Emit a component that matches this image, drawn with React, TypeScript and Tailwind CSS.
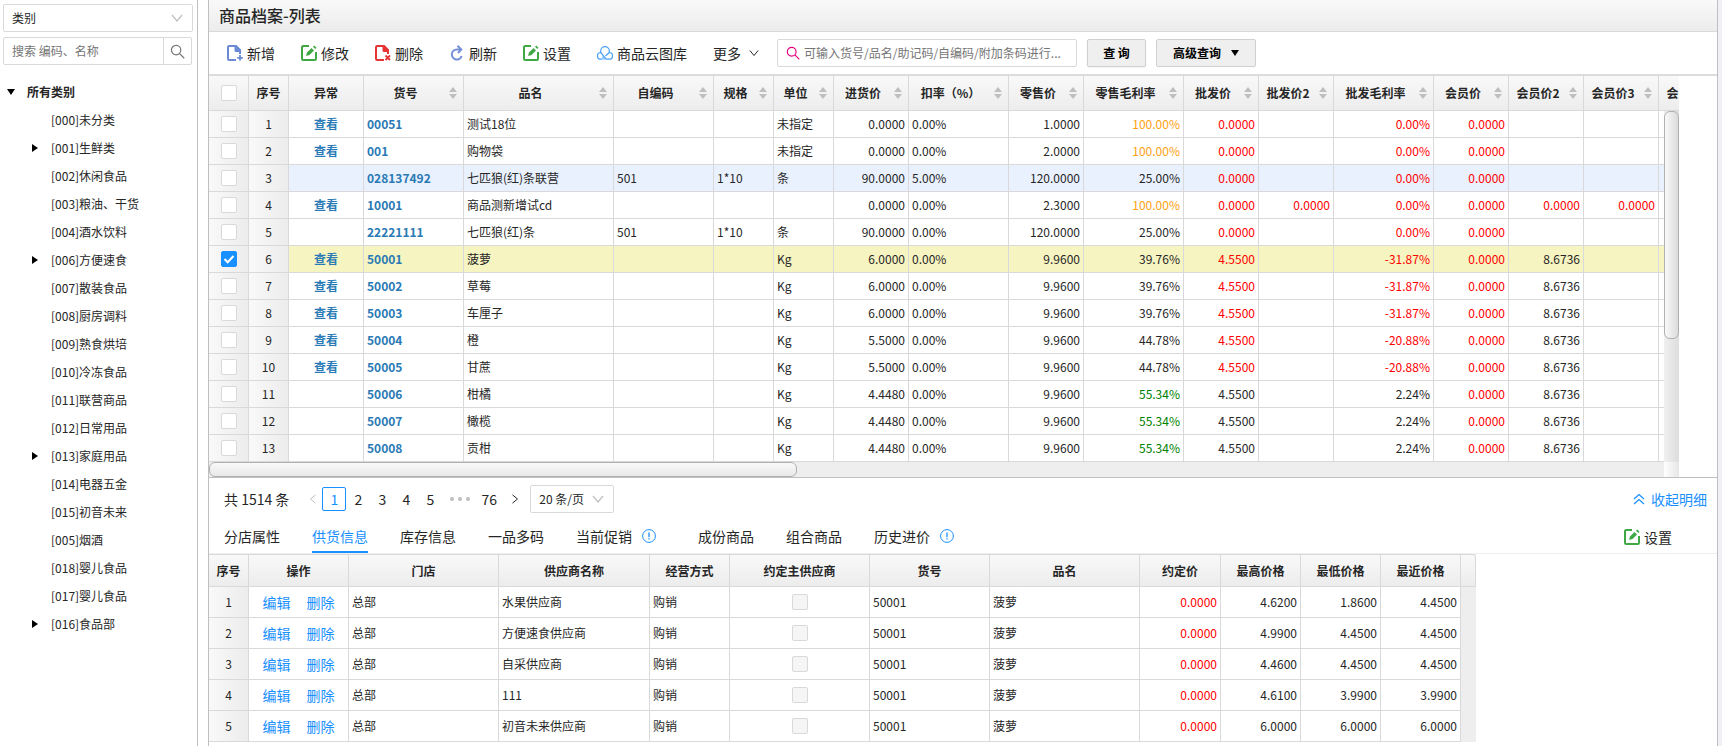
import React from "react";

const toolbarText = "flex items-center gap-1 text-sm leading-5 text-[#262626]";

type Col = { title: string; width: string; sort?: boolean };

const columns: Col[] = [
    { title: "异常", width: "w-[75px]" },
    { title: "货号", width: "w-[100px]", sort: true },
    { title: "品名", width: "w-[150px]", sort: true },
    { title: "自编码", width: "w-[100px]", sort: true },
    { title: "规格", width: "w-[60px]", sort: true },
    { title: "单位", width: "w-[60px]", sort: true },
    { title: "进货价", width: "w-[75px]", sort: true },
    { title: "扣率（%）", width: "w-[100px]", sort: true },
    { title: "零售价", width: "w-[75px]", sort: true },
    { title: "零售毛利率", width: "w-[100px]", sort: true },
    { title: "批发价", width: "w-[75px]", sort: true },
    { title: "批发价2", width: "w-[75px]", sort: true },
    { title: "批发毛利率", width: "w-[100px]", sort: true },
    { title: "会员价", width: "w-[75px]", sort: true },
    { title: "会员价2", width: "w-[75px]", sort: true },
    { title: "会员价3", width: "w-[75px]", sort: true },
    { title: "会员价4", width: "w-[75px]", sort: true },
];

// 异常, 货号, 品名, 自编码, 规格, 单位, 进货价, 扣率, 零售价, 零售毛利率, 批发价, 批发价2, 批发毛利率, 会员价, 会员价2, 会员价3
const goods: string[][] = [
    ["查看", "00051", "测试18位", "", "", "未指定", "0.0000", "0.00%", "1.0000", "100.00%", "0.0000", "", "0.00%", "0.0000", "", "", ""],
    ["查看", "001", "购物袋", "", "", "未指定", "0.0000", "0.00%", "2.0000", "100.00%", "0.0000", "", "0.00%", "0.0000", "", "", ""],
    ["", "028137492", "七匹狼(红)条联营", "501", "1*10", "条", "90.0000", "5.00%", "120.0000", "25.00%", "0.0000", "", "0.00%", "0.0000", "", "", ""],
    ["查看", "10001", "商品测新增试cd", "", "", "", "0.0000", "0.00%", "2.3000", "100.00%", "0.0000", "0.0000", "0.00%", "0.0000", "0.0000", "0.0000", ""],
    ["", "22221111", "七匹狼(红)条", "501", "1*10", "条", "90.0000", "0.00%", "120.0000", "25.00%", "0.0000", "", "0.00%", "0.0000", "", "", ""],
    ["查看", "50001", "菠萝", "", "", "Kg", "6.0000", "0.00%", "9.9600", "39.76%", "4.5500", "", "-31.87%", "0.0000", "8.6736", "", ""],
    ["查看", "50002", "草莓", "", "", "Kg", "6.0000", "0.00%", "9.9600", "39.76%", "4.5500", "", "-31.87%", "0.0000", "8.6736", "", ""],
    ["查看", "50003", "车厘子", "", "", "Kg", "6.0000", "0.00%", "9.9600", "39.76%", "4.5500", "", "-31.87%", "0.0000", "8.6736", "", ""],
    ["查看", "50004", "橙", "", "", "Kg", "5.5000", "0.00%", "9.9600", "44.78%", "4.5500", "", "-20.88%", "0.0000", "8.6736", "", ""],
    ["查看", "50005", "甘蔗", "", "", "Kg", "5.5000", "0.00%", "9.9600", "44.78%", "4.5500", "", "-20.88%", "0.0000", "8.6736", "", ""],
    ["", "50006", "柑橘", "", "", "Kg", "4.4480", "0.00%", "9.9600", "55.34%", "4.5500", "", "2.24%", "0.0000", "8.6736", "", ""],
    ["", "50007", "橄榄", "", "", "Kg", "4.4480", "0.00%", "9.9600", "55.34%", "4.5500", "", "2.24%", "0.0000", "8.6736", "", ""],
    ["", "50008", "贡柑", "", "", "Kg", "4.4480", "0.00%", "9.9600", "55.34%", "4.5500", "", "2.24%", "0.0000", "8.6736", "", ""],
];

const tree = [
    { name: "[000]未分类" },
    { name: "[001]生鲜类", open: true },
    { name: "[002]休闲食品" },
    { name: "[003]粮油、干货" },
    { name: "[004]酒水饮料" },
    { name: "[006]方便速食", open: true },
    { name: "[007]散装食品" },
    { name: "[008]厨房调料" },
    { name: "[009]熟食烘培" },
    { name: "[010]冷冻食品" },
    { name: "[011]联营商品" },
    { name: "[012]日常用品" },
    { name: "[013]家庭用品", open: true },
    { name: "[014]电器五金" },
    { name: "[015]初音未来" },
    { name: "[005]烟酒" },
    { name: "[018]婴儿食品" },
    { name: "[017]婴儿食品" },
    { name: "[016]食品部", open: true },
];

const supplyCols: Col[] = [
    { title: "序号", width: "w-10" },
    { title: "操作", width: "w-[100px]" },
    { title: "门店", width: "w-[150px]" },
    { title: "供应商名称", width: "w-[151px]" },
    { title: "经营方式", width: "w-[80px]" },
    { title: "约定主供应商", width: "w-[140px]" },
    { title: "货号", width: "w-[120px]" },
    { title: "品名", width: "w-[150px]" },
    { title: "约定价", width: "w-[81px]" },
    { title: "最高价格", width: "w-[80px]" },
    { title: "最低价格", width: "w-[80px]" },
    { title: "最近价格", width: "w-[80px]" },
];

const supplies = [
    { name: "水果供应商", high: "4.6200", low: "1.8600", last: "4.4500" },
    { name: "方便速食供应商", high: "4.9900", low: "4.4500", last: "4.4500" },
    { name: "自采供应商", high: "4.4600", low: "4.4500", last: "4.4500" },
    { name: "111", high: "4.6100", low: "3.9900", last: "3.9900" },
    { name: "初音未来供应商", high: "6.0000", low: "6.0000", last: "6.0000" },
];

const tabs = [
    { name: "分店属性" },
    { name: "供货信息" },
    { name: "库存信息" },
    { name: "一品多码" },
    { name: "当前促销", tip: true },
    { name: "成份商品" },
    { name: "组合商品" },
    { name: "历史进价", tip: true },
];

const Chevron = ({ className, d = "M1 3 L6 9 L11 3" }: { className?: string; d?: string }) => (
    <svg viewBox="0 0 12 12" className={className} fill="none" stroke="currentColor" strokeWidth="1.2">
        <path d={d} />
    </svg>
);

const FileIcon = ({ color, remove }: { color: string; remove?: boolean }) => (
    <svg viewBox="0 0 16 16" className="size-4" fill="none" stroke={color}>
        <path d="M9 15H2.2Q1 15 1 13.8V2.2Q1 1 2.2 1H8.5" strokeWidth="2" />
        <path d="M7.5 0H9.5L14 4.500V9H12V7H9Q7.500 7 7.500 5.500Z" fill={color} stroke="none" />
        {remove ? (
            <path d="M10.500 10.500L15 15M15 10.500L10.500 15" strokeWidth="1.800" />
        ) : (
            <path d="M13 10V15.500M10.200 12.800H15.800" strokeWidth="1.800" />
        )}
    </svg>
);

const EditIcon = () => (
    <svg viewBox="0 0 16 16" className="size-4" fill="none" stroke="#3fa845">
        <path d="M8 1H2.2Q1 1 1 2.2V13.8Q1 15 2.2 15H13.8Q15 15 15 13.8V7" strokeWidth="2" />
        <path d="M5 11L6 7.5L10.5 3L13 5.5L8.5 10Z" fill="#3fa845" stroke="none" />
        <path d="M12 1.7L13.2 0.5L15.5 2.8L14.3 4Z" fill="#3fa845" stroke="none" />
    </svg>
);

const RefreshIcon = () => (
    <svg viewBox="0 0 16 16" className="size-4" fill="none" stroke="#7490d8" strokeWidth="2">
        <path d="M12 4.500H7.800A5 5 0 1 0 12.600 11" />
        <path d="M8.500 0.800L12.300 4.500L9 8" />
    </svg>
);

const CloudIcon = () => (
    <svg viewBox="0 0 16 16" className="size-4" fill="none" stroke="#4a9ff5" strokeWidth="1.2">
        <path d="M5 14.200H4A3.300 3.300 0 0 1 3.700 7.500V6A4.300 4.300 0 0 1 12.300 6V7.500A3.300 3.300 0 0 1 12 14.200H10Q8.500 14 7.500 12L3.700 7.500M12.300 7.500L8.500 11" />
        <path d="M6 11.500V14.500M8 13V14.500" />
    </svg>
);

const SearchIcon = ({ className }: { className?: string }) => (
    <svg viewBox="0 0 16 16" className={className} fill="none" stroke="currentColor" strokeWidth="1.3">
        <circle cx="6.5" cy="6.5" r="5" />
        <path d="M10.2 10.2L15.2 15.2" />
    </svg>
);

const TipIcon = () => (
    <svg viewBox="0 0 14 14" className="size-[14px]" fill="none" stroke="#1890ff">
        <circle cx="7" cy="7" r="6.4" />
        <path d="M7 3.5V8.2M7 9.3V10.6" strokeWidth="1.3" />
    </svg>
);

const SortIcon = () => (
    <svg viewBox="0 0 8 12" className="absolute right-1.5 top-[11px] h-3 w-2" fill="#bfbfbf">
        <path d="M4 0L8 5H0Z" />
        <path d="M4 12L8 7H0Z" />
    </svg>
);

const Check = ({ label, checked, disabled }: { label: string; checked?: boolean; disabled?: boolean }) => (
    <label className="relative mx-auto block size-4">
        <input
            type="checkbox"
            aria-label={label}
            defaultChecked={checked}
            disabled={disabled}
            className="peer block size-4 appearance-none rounded-xs border border-[#d9d9d9] bg-white checked:border-[#1890ff] checked:bg-[#1890ff] disabled:bg-[#f5f5f5]"
        />
        <svg viewBox="0 0 16 16" className="pointer-events-none absolute inset-0 hidden size-4 peer-checked:block" fill="none" stroke="#fff" strokeWidth="2">
            <path d="M3.5 8L6.7 11.2L12.5 5" />
        </svg>
    </label>
);

const cellClass = (row: string[], i: number) => {
    if (i === 0) return "text-center font-bold text-[#2a7ab5]";
    if (i === 1) return "font-bold text-[#2a7ab5]";
    if (i < 6 || i === 7) return "";
    const v = row[i];
    if (i === 9 && v === "100.00%") return "text-right text-[#ffa011]";
    if (i === 9 && v === "55.34%") return "text-right text-[#008000]";
    if (i === 10 && row[12] !== "2.24%") return "text-right text-[#ff0000]";
    if (i === 12 && v !== "2.24%") return "text-right text-[#ff0000]";
    if (i > 10 && v === "0.0000") return "text-right text-[#ff0000]";
    return "text-right";
};

const headBg = "bg-linear-to-b from-[#f9f9f9] to-[#ececec]";
const sideBg = "bg-linear-to-r from-[#f9f9f9] to-[#ececec]";

const Sidebar = () => (
    <aside className="w-[198px] shrink-0 border-r border-[#bfbfbf] pl-[3px] pt-1">
        <div className="relative mr-1 h-7">
            <select aria-label="类别" className="h-7 w-full appearance-none rounded-xs border border-[#d9d9d9] bg-white px-2 text-xs text-[#262626]">
                <option>类别</option>
            </select>
            <Chevron className="pointer-events-none absolute right-2.5 top-2 size-3 text-[#bfbfbf]" />
        </div>
        <div className="mr-[5px] mt-[5px] flex h-7 rounded-xs border border-[#d9d9d9]">
            <input aria-label="搜索" placeholder="搜索 编码、名称" className="min-w-0 flex-1 px-2 text-xs outline-none placeholder:text-[#757575]" />
            <button aria-label="查找" className="flex w-7 items-center justify-center border-l border-[#d9d9d9] text-[#757575]">
                <SearchIcon className="size-[15px]" />
            </button>
        </div>
        <ul className="mt-[13px] text-xs text-[#262626]">
            <li className="flex h-7 items-center font-bold">
                <svg viewBox="0 0 8 6" className="ml-1 mr-3 h-1.5 w-2"><path d="M0 0H8L4 6Z" /></svg>
                所有类别
            </li>
            {tree.map((n) => (
                <li key={n.name} className="flex h-7 items-center pl-[29px]">
                    <span className="w-[19px]">
                        {n.open && <svg viewBox="0 0 6 8" className="h-2 w-1.5"><path d="M0 0V8L6 4Z" /></svg>}
                    </span>
                    {n.name}
                </li>
            ))}
        </ul>
    </aside>
);

const Toolbar = () => (
    <div className="flex h-[44px] items-center border-b-2 border-[#dcdcdc] pl-[18px]">
        <div className="flex items-center gap-[26px]">
            <button className={toolbarText}><FileIcon color="#6a8ad6" />新增</button>
            <button className={toolbarText}><EditIcon />修改</button>
            <button className={toolbarText}><FileIcon color="#e53434" remove />删除</button>
            <button className={toolbarText}><RefreshIcon />刷新</button>
            <button className={toolbarText}><EditIcon />设置</button>
            <button className={toolbarText}><CloudIcon />商品云图库</button>
            <button className="flex items-center gap-2 text-sm leading-5 text-[#262626]">更多<Chevron className="size-2.5" /></button>
        </div>
        <div className="ml-[18px] flex h-7 w-[300px] items-center gap-1 rounded-xs border border-[#d9d9d9] pl-2">
            <SearchIcon className="size-[14px] text-[#e3007f]" />
            <input aria-label="关键字" placeholder="可输入货号/品名/助记码/自编码/附加条码进行..." className="min-w-0 flex-1 text-xs outline-none placeholder:text-[#757575]" />
        </div>
        <button className="ml-2.5 h-7 w-[59px] rounded-xs border border-[#d0d0d0] bg-[#efefef] text-xs font-bold shadow-xs">查 询</button>
        <button className="ml-2.5 flex h-7 w-[100px] items-center justify-center gap-2.5 rounded-xs border border-[#d0d0d0] bg-[#efefef] text-xs font-bold">
            高级查询
            <svg viewBox="0 0 8 6" className="h-1.5 w-2"><path d="M0 0H8L4 6Z" /></svg>
        </button>
    </div>
);

const GoodsTable = () => (
    <div className="pr-[38px]">
        <div className="relative overflow-hidden">
            <table className="w-[1525px] table-fixed border-separate border-spacing-0 text-xs text-[#262626]">
                <thead>
                    <tr className={`h-[35px] ${headBg}`}>
                        <th className="w-10 border-b border-r border-[#d9d9d9]"><Check label="全选" /></th>
                        <th className="w-10 border-b border-r border-[#d9d9d9]">序号</th>
                        {columns.map((c) => (
                            <th key={c.title} className={`relative whitespace-nowrap border-b border-r border-[#d9d9d9] ${c.width} ${c.sort ? "pr-4" : ""}`}>
                                {c.title}
                                {c.sort && <SortIcon />}
                            </th>
                        ))}
                    </tr>
                </thead>
                <tbody>
                    {goods.map((row, r) => (
                        <tr key={row[1]} className={`h-[27px] ${r === 2 ? "bg-[#e9f1fe]" : r === 5 ? "bg-[#f6f4c1]" : "bg-white"}`}>
                            <td className={`border-b border-r border-[#d9d9d9] ${sideBg}`}><Check label={row[2]} checked={r === 5} /></td>
                            <td className={`border-b border-r border-[#d9d9d9] text-center ${sideBg}`}>{r + 1}</td>
                            {row.map((v, i) => (
                                <td key={i} className={`whitespace-nowrap border-b border-r border-[#d9d9d9] px-[3px] ${cellClass(row, i)}`}>
                                    {i === 0 && v ? <a href="#">{v}</a> : v}
                                </td>
                            ))}
                        </tr>
                    ))}
                </tbody>
            </table>
            {/* scroll tracks */}
            <div className="absolute bottom-0 right-0 top-[35px] w-[15px] bg-linear-to-r from-[#f0f0f0] to-[#dddddd]">
                <div className="h-[228px] rounded-md border border-[#b0b0b0] bg-linear-to-r from-[#f9f9f9] to-[#dcdcdc]" />
            </div>
        </div>
        <div className="flex h-[15px]">
            <div className="flex-1 bg-[#eeeeee]">
                <div className="h-[15px] w-[588px] rounded-md border border-[#b0b0b0] bg-linear-to-b from-[#f9f9f9] to-[#e8e8e8]" />
            </div>
            <div className="w-[15px] bg-linear-to-r from-white to-[#e6e6e6]" />
        </div>
    </div>
);

const Pagination = () => (
    <div className="flex h-[43px] items-center border-t border-[#bfbfbf] pl-[15px] pr-2.5 text-sm text-[#262626]">
        <span>共 1514 条</span>
        <button aria-label="上一页" className="ml-[15px] flex w-[18px] justify-center text-[#bfbfbf]"><Chevron className="size-2.5" d="M9 1L3 6L9 11" /></button>
        <button className="h-6 w-6 rounded-xs border border-[#1890ff] leading-5 text-[#1890ff]">1</button>
        {["2", "3", "4", "5"].map((p) => (
            <button key={p} className="h-6 w-6 leading-6">{p}</button>
        ))}
        <span className="flex w-[35px] justify-center gap-1">
            <i className="size-1 rounded-full bg-[#bfbfbf]" />
            <i className="size-1 rounded-full bg-[#bfbfbf]" />
            <i className="size-1 rounded-full bg-[#bfbfbf]" />
        </span>
        <button className="h-6 w-6 leading-6">76</button>
        <button aria-label="下一页" className="ml-0.5 flex w-6 justify-center"><Chevron className="size-2.5" d="M3 1L9 6L3 11" /></button>
        <div className="relative ml-[3px] h-7">
            <select aria-label="每页条数" className="h-7 w-[84px] appearance-none rounded-xs border border-[#d9d9d9] bg-white pl-2 text-xs">
                <option>20 条/页</option>
            </select>
            <Chevron className="pointer-events-none absolute right-2.5 top-2 size-3 text-[#bfbfbf]" />
        </div>
        <a href="#" className="ml-auto flex items-center gap-1.5 text-[#1890ff]">
            <Chevron className="size-3" d="M1 6L6 1.5L11 6M1 11L6 6.5L11 11" />
            收起明细
        </a>
    </div>
);

const SupplyTable = () => (
    <div className="flex">
        <table className="w-[1252px] table-fixed border-separate border-spacing-0 text-xs text-[#262626]">
            <thead>
                <tr className={`h-[33px] ${headBg}`}>
                    {supplyCols.map((c) => (
                        <th key={c.title} className={`border-b border-r border-t border-[#d9d9d9] ${c.width}`}>{c.title}</th>
                    ))}
                </tr>
            </thead>
            <tbody>
                {supplies.map((s, i) => (
                    <tr key={s.name} className="h-[31px] *:border-b *:border-r *:border-[#d9d9d9] *:px-[3px]">
                        <td className={`text-center ${sideBg}`}>{i + 1}</td>
                        <td>
                            <div className="flex justify-center gap-4 text-sm text-[#1890ff]">
                                <a href="#">编辑</a>
                                <a href="#">删除</a>
                            </div>
                        </td>
                        <td>总部</td>
                        <td>{s.name}</td>
                        <td>购销</td>
                        <td><Check label="约定主供应商" disabled /></td>
                        <td>50001</td>
                        <td>菠萝</td>
                        <td className="text-right text-[#ff0000]">0.0000</td>
                        <td className="text-right">{s.high}</td>
                        <td className="text-right">{s.low}</td>
                        <td className="text-right">{s.last}</td>
                    </tr>
                ))}
            </tbody>
        </table>
        <div className="flex w-[15px] flex-col bg-[#eeeeee]">
            <div className={`h-[33px] rounded-tr-sm border-b border-r border-t border-[#d9d9d9] ${headBg}`} />
        </div>
    </div>
);

const App = () => {
    return (
        <div className="flex min-h-screen bg-white font-['Noto_Sans_CJK_SC',sans-serif]">
            <Sidebar />
            <main className="ml-2.5 min-w-0 flex-1 border-x border-[#bfbfbf]">
                <h1 className={`h-8 border-b border-[#d9d9d9] pl-2.5 text-base font-medium leading-[30px] text-[#262626] ${headBg}`}>商品档案-列表</h1>
                <Toolbar />
                <GoodsTable />
                <Pagination />
                <div className="flex h-[34px] items-center border-b border-[#eeeeee] pl-[15px] pr-[45px]">
                    <div role="tablist" className="flex h-[33px] gap-8 text-sm text-[#262626]">
                        {tabs.map((t, i) => (
                            <button key={t.name} role="tab" className={`flex items-center gap-2.5 border-b-2 ${i === 1 ? "border-[#1890ff] text-[#1890ff]" : "border-transparent"} ${t.tip ? "pr-2.5" : ""}`}>
                                {t.name}
                                {t.tip && <TipIcon />}
                            </button>
                        ))}
                    </div>
                    <button className={`ml-auto ${toolbarText}`}><EditIcon />设置</button>
                </div>
                <SupplyTable />
            </main>
            <div className="w-1 bg-[#f0f0f5]" />
        </div>
    );
};

export default App;
